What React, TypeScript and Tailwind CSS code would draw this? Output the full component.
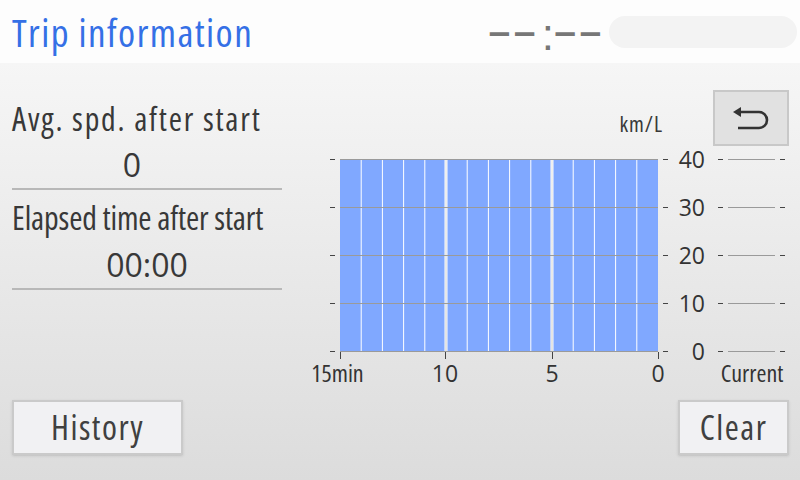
const levels = [40, 30, 20, 10, 0];
const yOf = (v: number) => 351.5 - v * 4.8;
const colW = 21.2;
const plotL = 340;

function BackIcon() {
  return (
    <svg width="36" height="24" viewBox="0 0 36 24" fill="none">
      <path d="M0 6 L8 1 L8 11 Z" fill="#333" />
      <path d="M7 6 H26 A8 8 0 0 1 26 22 H5" stroke="#333" strokeWidth="2.6" />
    </svg>
  );
}

function Chart() {
  const cols = Array.from({ length: 15 }, (_, i) => i);
  return (
    <svg width="518" height="259" viewBox="282 136 518 259" className="block -mt-[10px]">
      {[0, 1, 2].map((g) => (
        <rect
          key={g}
          x={plotL + g * 106 + (g > 0 ? 1 : 0)}
          y={159.5}
          width={106 - (g > 0 ? 1 : 0) - (g < 2 ? 1 : 0)}
          height={192}
          fill="#ffffff"
        />
      ))}
      {cols.map((i) => {
        const x0 = plotL + i * colW + (i % 5 === 0 && i > 0 ? 1.5 : i === 0 ? 0 : 0.5);
        const x1 = plotL + (i + 1) * colW - (i % 5 === 4 && i < 14 ? 1.5 : i === 14 ? 0 : 0.5);
        return <rect key={i} x={x0} y={159.5} width={x1 - x0} height={192} fill="#80a8ff" />;
      })}
      {levels.map((v) => (
        <g key={v}>
          <line x1={plotL} x2={658} y1={yOf(v)} y2={yOf(v)} stroke="#9a9a9a" strokeWidth="1" />
          <line x1={330} x2={335} y1={yOf(v)} y2={yOf(v)} stroke="#444" strokeWidth="1" />
          <line x1={663} x2={668} y1={yOf(v)} y2={yOf(v)} stroke="#444" strokeWidth="1" />
          <text x={705} y={yOf(v) + 8.5} textAnchor="end" fontSize="23" fill="#333" className="font-stretch-normal">
            {v}
          </text>
          <line x1={718} x2={723} y1={yOf(v)} y2={yOf(v)} stroke="#444" strokeWidth="1" />
          <line x1={728} x2={775} y1={yOf(v)} y2={yOf(v)} stroke="#9a9a9a" strokeWidth="1" />
          <line x1={780} x2={785} y1={yOf(v)} y2={yOf(v)} stroke="#444" strokeWidth="1" />
        </g>
      ))}
      {[340.5, 445.5, 552.5, 658.5].map((x) => (
        <line key={x} x1={x} x2={x} y1={352} y2={359} stroke="#444" strokeWidth="1" />
      ))}
      <g fontSize="24" fill="#333" textAnchor="middle">
        <text x={337.5} y={382}>15min</text>
        <text x={445} y={382} fontSize="23" className="font-stretch-normal">10</text>
        <text x={552} y={382} fontSize="23" className="font-stretch-normal">5</text>
        <text x={658} y={382} fontSize="23" className="font-stretch-normal">0</text>
        <text x={752} y={382}>Current</text>
      </g>
    </svg>
  );
}

export default function App() {
  return (
    <div className="w-[800px] h-[480px] flex flex-col overflow-hidden font-['Open_Sans',sans-serif] font-stretch-condensed text-[#383838]">
      {/* Header */}
      <div className="h-[63px] shrink-0 bg-[#fdfdfd] flex items-center pl-3 pr-[3px]">
        <h1 className="text-[39px] leading-none tracking-[1.4px] text-[#3570e6]">Trip information</h1>
        <div className="flex-1" />
        <div className="flex items-center text-[#777] leading-none">
          <span className="font-['DejaVu_Sans_Mono',monospace] font-bold text-[32px] tracking-[6px]">––</span>
          <span className="font-['Liberation_Sans',sans-serif] px-[1.5px] text-[44px] translate-y-[3px]">:</span>
          <span className="font-['DejaVu_Sans_Mono',monospace] font-bold text-[32px] tracking-[6px] -mr-[6px]">––</span>
        </div>
        <div className="ml-[9px] w-[188px] h-[32px] rounded-full bg-[#f3f3f3]" />
      </div>

      {/* Body */}
      <div className="flex-1 flex flex-col bg-linear-to-b from-[#f6f6f6] to-[#dcdcdc]">
        <div className="h-[337px] flex">
          <div className="ml-3 w-[270px] pt-[36px]">
            <div className="text-[32px] leading-[40px] h-[40px] tracking-[1.8px] whitespace-nowrap">Avg. spd. after start</div>
            <div className="mt-[6px] text-[32px] leading-[40px] h-[40px] text-center pr-[30px] font-stretch-normal">0</div>
            <div className="mt-[3px] h-[2px] bg-[#b8b8b8]" />
            <div className="mt-[8px] text-[32px] leading-[40px] h-[40px] tracking-[-0.15px] whitespace-nowrap">Elapsed time after start</div>
            <div className="mt-[7px] text-[32px] leading-[40px] h-[40px] text-center font-stretch-normal">00:00</div>
            <div className="mt-[3px] h-[2px] bg-[#b8b8b8]" />
          </div>

          <div className="flex-1 flex flex-col">
            <div className="pt-[27px] flex justify-end items-start">
              <span className="mt-[22px] text-[22px] leading-[22px] tracking-[1px]">km/L</span>
              <button className="ml-[50px] mr-[11px] w-[76px] h-[56px] border-2 border-[#c8c8c8] bg-[#e1e1e1] flex items-center justify-center">
                <BackIcon />
              </button>
            </div>
            <Chart />
          </div>
        </div>

        {/* Bottom buttons */}
        <div className="h-[55px] flex justify-between px-3 pr-[11px]">
          <button className="w-[171px] h-[55px] border-2 border-[#cacaca] bg-[#f1f1f3] text-[34px] tracking-[1.5px] text-[#404040] shadow-sm">
            History
          </button>
          <button className="w-[111px] h-[55px] border-2 border-[#cacaca] bg-[#f1f1f3] text-[34px] tracking-[1.5px] text-[#404040] shadow-sm">
            Clear
          </button>
        </div>
      </div>
    </div>
  );
}
